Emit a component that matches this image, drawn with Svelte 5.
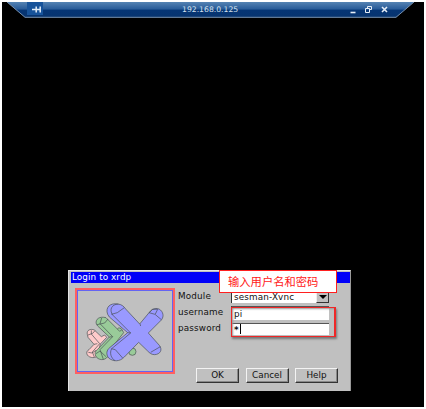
<script>
  const fields = [
    { label: 'Module', value: 'sesman-Xvnc', kind: 'select' },
    { label: 'username', value: 'pi', kind: 'text' },
    { label: 'password', value: '*', kind: 'password' }
  ];
  const buttons = ['OK', 'Cancel', 'Help'];
</script>

<div class="page">
  <main class="screen">
    <header class="bar">
      <svg class="barbg" width="407" height="16" viewBox="0 0 407 16">
        <defs>
          <linearGradient id="blue" x1="0" y1="0" x2="0" y2="1">
            <stop offset="0" stop-color="#5583b3" />
            <stop offset=".46" stop-color="#285b98" />
            <stop offset=".52" stop-color="#063574" />
            <stop offset="1" stop-color="#07346f" />
          </linearGradient>
        </defs>
        <path d="M0 0H407L389 15.5H18Z" fill="url(#blue)" />
        <path d="M0 0L18 15.3H389L407 0" fill="none" stroke="#7890ac" stroke-width="1" />
      </svg>
      <span class="pin">
        <svg width="16" height="12" viewBox="0 0 16 12"><path d="M5 6.5H9M9.2 3.5V9.5M9 6.5H13M13.2 3.5V9.5" fill="none" stroke="#e3edf7" stroke-width="1.5" /></svg>
      </span>
      <span class="address">192.168.0.125</span>
      <span class="controls">
        <svg width="40" height="12" viewBox="0 0 40 12" fill="none" stroke="#e6eef7">
          <path d="M0.5 8.5H5.5" stroke-width="1.6" />
          <path d="M17.5 4.5V2.5H21.5V5.5H20M15.5 4.5H19.5V8.5H15.5Z" stroke-width="1" />
          <path d="M32 3L37 8M37 3L32 8" stroke-width="1.6" />
        </svg>
      </span>
    </header>

    <section class="dialog">
      <div class="title">Login to xrdp</div>
      <div class="content">
        <div class="logo">
          <svg width="94" height="80" viewBox="25 21 282 240" stroke="#454d50" stroke-width="2" stroke-linejoin="round">
            <g fill="#ffcaca">
              <path d="M53 151C50 139 62 133 74 138L95 158L105 153L111 160L92 180L84 215C79 223 60 223 53 213C49 206 52 200 58 197L73 181L55 160Z" />
              <path d="M65 139L65 150L90 179L68 204L74 219M55 153L69 148L76 140M56 205L67 207L79 199M73 181L83 179" fill="none" />
            </g>
            <g fill="#99cb99">
              <circle cx="188" cy="203" r="11" />
              <path d="M80 120C76 105 90 96 109 101L143 135C145 130 155 131 157 137L162 146L124 194L114 218C105 231 85 229 78 216C74 207 77 201 83 197L119 159L84 126Z" />
              <path d="M96 102L91 119L129 158L91 197L101 226M82 122L105 117L115 105M79 209L91 201L109 218M119 159L129 158M143 135L150 142L157 137" fill="none" />
            </g>
            <g fill="#9999ff">
              <path d="M114 91C106 70 122 56 144 60C157 61 163 68 168 75L210 120L239 85C250 70 268 70 276 82C284 94 279 105 272 111L236 147L269 184C280 198 271 211 255 212C244 212 239 206 234 201L207 175L164 219C150 234 130 233 117 222C108 211 111 198 120 191L174 146L119 99Z" />
              <path d="M146 60C126 61 118 77 129 93L183 147L126 194C119 207 124 222 136 230M125 91L143 86L164 71M125 194L137 197L159 222M174 146L183 147M238 86L256 91L275 107M239 86L248 76H264L257 90M243 205L272 188M211 120L213 126" fill="none" />
            </g>
          </svg>
        </div>
        <div class="form">
          {#each fields as field}
            <div class="row">
              <span class="label">{field.label}</span>
              <span class="field {field.kind}">
                <span class="value">{field.value}</span>
                {#if field.kind === 'select'}
                  <span class="drop"><svg width="8" height="4" viewBox="0 0 8 4"><path d="M0 0H8L4 4Z" /></svg></span>
                {/if}
              </span>
            </div>
          {/each}
          <div class="actions">
            {#each buttons as name}
              <button>{name}</button>
            {/each}
          </div>
        </div>
      </div>
      <div class="note">输入用户名和密码</div>
      <div class="highlight"></div>
    </section>
  </main>
</div>

<style>
  .page {
    box-sizing: border-box;
    width: 426px;
    height: 409px;
    padding: 2px;
    background: #fff;
    font-family: "DejaVu Sans", "Liberation Sans", sans-serif;
  }
  .screen {
    display: flex;
    flex-direction: column;
    justify-content: space-between;
    box-sizing: border-box;
    width: 422px;
    height: 405px;
    padding: 0 0 16px;
    background: #000;
  }
  .bar {
    position: relative;
    display: flex;
    align-items: center;
    width: 407px;
    height: 15px;
    margin-left: 5px;
  }
  .barbg { position: absolute; left: 0; top: 0; }
  .bar span { position: relative; display: flex; align-items: center; }
  .bar .pin {
    width: 16px;
    height: 13px;
    margin-left: 20px;
    margin-top: -2px;
    background: #17539a;
  }
  .bar .address {
    margin-left: 139px;
    width: 58px;
    color: #d3e0ed;
    font-size: 7.7px;
    white-space: nowrap;
  }
  .bar .controls { margin-left: auto; margin-right: 24px; }
  .dialog {
    position: relative;
    box-sizing: border-box;
    width: 283px;
    height: 121px;
    margin-left: 66px;
    padding: 1px 0 0 1px;
    border: 0 solid #e4e4e4;
    border-top-width: 1px;
    border-left-width: 1px;
    border-right: 1px solid #999;
    background: #c0c0c0;
    color: #111;
    font-size: 8.8px;
  }
  .title {
    height: 11px;
    margin-left: 1px;
    padding-left: 1px;
    background: #0000f8;
    color: #fff;
    line-height: 10px;
    font-size: 8.8px;
    letter-spacing: .1px;
  }
  .content { display: flex; padding: 5px 0 0 5px; }
  .logo {
    flex: none;
    box-sizing: border-box;
    width: 100px;
    height: 86px;
    border: 2px solid #ff6060;
    overflow: hidden;
    box-shadow: inset 0 0 0 1px #6464f2;
  }
  .logo svg { display: block; margin: 1px; }
  .form { flex: none; width: 175px; padding: 1px 0 0 3px; }
  .row { display: flex; height: 16px; }
  .label {
    flex: none;
    width: 53px;
    line-height: 14px;
    letter-spacing: .17px;
  }
  .field {
    display: flex;
    flex: none;
    box-sizing: border-box;
    width: 98px;
    height: 13px;
    margin-top: 1px;
    border-top: 1px solid #555;
    border-left: 1px solid #333;
    background: #fff;
  }
  .value { padding-left: 2px; line-height: 12px; flex: 1; letter-spacing: .15px; }
  .field.text { height: 14px; }
  .text .value { line-height: 14px; }
  .field.password { height: 12px; margin-top: 2px; }
  .password .value {
    flex: none;
    height: 10px;
    padding: 0 1px 0 2px;
    border-right: 1px solid #000;
    font-weight: bold;
  }
  .drop {
    display: flex;
    align-items: center;
    justify-content: center;
    box-sizing: border-box;
    width: 13px;
    height: 12px;
    border: 1px solid #eee;
    border-right-color: #333;
    border-bottom-color: #333;
    background: #c0c0c0;
  }
  .actions { display: flex; gap: 6.5px; padding: 31px 0 0 18px; }
  button {
    flex: none;
    box-sizing: border-box;
    width: 43px;
    height: 15px;
    padding: 0;
    border: 1px solid #f3f3f3;
    border-right: 1px solid #333;
    border-bottom: 1px solid #333;
    box-shadow: inset -1px -1px #888;
    background: #c0c0c0;
    color: #111;
    font: 8.8px/13px "DejaVu Sans", sans-serif;
  }
  .note {
    position: absolute;
    left: 150px;
    top: -1px;
    box-sizing: border-box;
    width: 118px;
    height: 23px;
    padding-left: 8px;
    border: 1px solid #ff2020;
    background: #fff;
    color: #ff2020;
    font: 11.3px/20px "Noto Sans CJK SC", sans-serif;
    white-space: nowrap;
  }
  .highlight {
    position: absolute;
    left: 162px;
    top: 36px;
    box-sizing: border-box;
    width: 105px;
    height: 30px;
    border: 1px solid #ef2727;
    border-right-width: 2px;
    box-shadow: 1px 2px 2px #777, inset 1px 1px 2px #999;
  }
</style>
